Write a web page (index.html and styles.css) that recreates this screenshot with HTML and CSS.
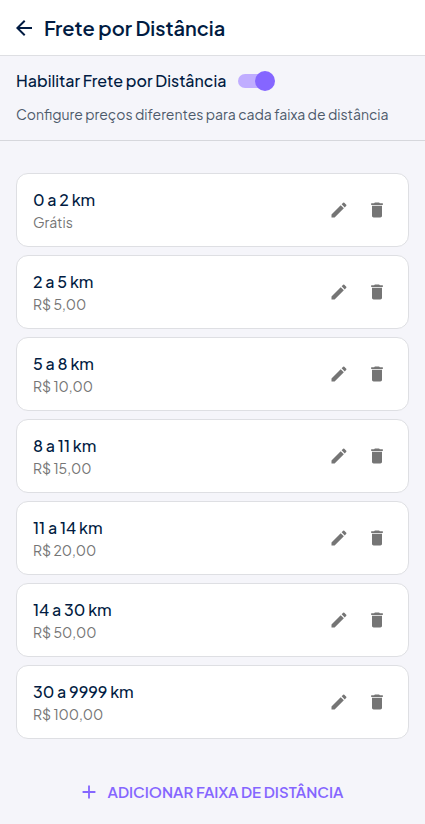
FILE: index.html
```html
<!DOCTYPE html>
<html lang="pt-BR">
<head>
<meta charset="utf-8">
<title>Frete por Distância</title>
<link rel="stylesheet" href="styles.css">
</head>
<body>
<svg class="defs" width="0" height="0">
<symbol id="edit" viewBox="0 0 24 24"><path d="M3 17.25V21h3.750L17.810 9.940l-3.750-3.750L3 17.250zM20.710 7.040c.39-.39.39-1.020 0-1.410l-2.340-2.340a.996.996 0 0 0-1.410 0l-1.830 1.830 3.750 3.750 1.830-1.830z"/></symbol>
<symbol id="trash" viewBox="0 0 24 24"><path d="M6 19c0 1.100.9 2 2 2h8c1.100 0 2-.9 2-2V7H6v12zM19 4h-3.500l-1-1h-5l-1 1H5v2h14V4z"/></symbol>
</svg>
<header class="header">
<svg class="back" viewBox="0 0 24 24"><path d="M20 11H7.830l5.590-5.590L12 4l-8 8 8 8 1.410-1.410L7.830 13H20v-2z"/></svg>
<h1 class="title">Frete por Distância</h1>
</header>
<section class="settings">
<div class="row"><span class="label">Habilitar Frete por Distância</span><span class="switch"></span></div>
<p class="hint">Configure preços diferentes para cada faixa de distância</p>
</section>
<main class="list">
<article class="card"><div class="info"><div class="range">0 a 2 km</div><div class="price">Grátis</div></div><svg class="icon"><use href="#edit"/></svg><svg class="icon"><use href="#trash"/></svg></article>
<article class="card"><div class="info"><div class="range">2 a 5 km</div><div class="price">R$ 5,00</div></div><svg class="icon"><use href="#edit"/></svg><svg class="icon"><use href="#trash"/></svg></article>
<article class="card"><div class="info"><div class="range">5 a 8 km</div><div class="price">R$ 10,00</div></div><svg class="icon"><use href="#edit"/></svg><svg class="icon"><use href="#trash"/></svg></article>
<article class="card"><div class="info"><div class="range">8 a 11 km</div><div class="price">R$ 15,00</div></div><svg class="icon"><use href="#edit"/></svg><svg class="icon"><use href="#trash"/></svg></article>
<article class="card"><div class="info"><div class="range">11 a 14 km</div><div class="price">R$ 20,00</div></div><svg class="icon"><use href="#edit"/></svg><svg class="icon"><use href="#trash"/></svg></article>
<article class="card"><div class="info"><div class="range">14 a 30 km</div><div class="price">R$ 50,00</div></div><svg class="icon"><use href="#edit"/></svg><svg class="icon"><use href="#trash"/></svg></article>
<article class="card"><div class="info"><div class="range">30 a 9999 km</div><div class="price">R$ 100,00</div></div><svg class="icon"><use href="#edit"/></svg><svg class="icon"><use href="#trash"/></svg></article>
</main>
<button class="add"><svg class="plus" viewBox="0 0 24 24"><path d="M19 13h-6v6h-2v-6H5v-2h6V5h2v6h6v2z"/></svg><span>ADICIONAR FAIXA DE DISTÂNCIA</span></button>
</body>
</html>
```
FILE: styles.css
```css
* { box-sizing: border-box; }
body { margin: 0; height: 824px; overflow: hidden; background: #f5f5fa; color: #011b42; font-family: "Plus Jakarta Sans", Inter, sans-serif; }
.defs { display: block; }
.header { height: 56px; display: flex; align-items: center; gap: 8px; padding: 0 12px; background: #fff; border-bottom: 1px solid #dedfe3; }
.back { width: 24px; height: 24px; fill: currentColor; }
.title { margin: 0; font-size: 20px; line-height: 28px; font-weight: 600; white-space: nowrap; }
.settings { height: 85px; padding: 13px 16px 0; border-bottom: 1px solid #d6d7dc; }
.row { display: flex; align-items: center; height: 24px; gap: 12px; }
.label { font-size: 16px; line-height: 24px; font-weight: 500; white-space: nowrap; width: 210px; }
.switch { position: relative; width: 34px; height: 14px; border-radius: 7px; background: #c0adff; }
.switch::after { content: ""; position: absolute; right: -3px; top: -3px; width: 20px; height: 20px; border-radius: 50%; background: #8566ff; }
.hint { margin: 11px 0 0; font-size: 14px; line-height: 20px; font-weight: 400; color: #4d5a6b; white-space: nowrap; }
.list { display: flex; flex-direction: column; gap: 8px; padding: 32px 16px 0; }
.card { height: 74px; display: flex; align-items: center; padding: 0 21px 0 16px; background: #fff; border: 1px solid #dedfe3; border-radius: 12px; }
.info { flex: 1; }
.range { font-size: 16px; line-height: 24px; font-weight: 500; }
.price { font-size: 14px; line-height: 20px; font-weight: 400; color: #757575; padding-bottom: 1px; }
.icon { width: 20px; height: 20px; fill: #757575; margin-left: 18px; }
.add { display: flex; align-items: center; justify-content: center; width: 100%; height: 42px; margin-top: 32px; padding: 0; border: 0; background: none; color: #8566ff; font: 600 15px/24px "Plus Jakarta Sans", Inter, sans-serif; gap: 8px; }
.plus { width: 22px; height: 22px; margin-left: -4px; fill: currentColor; }
```
